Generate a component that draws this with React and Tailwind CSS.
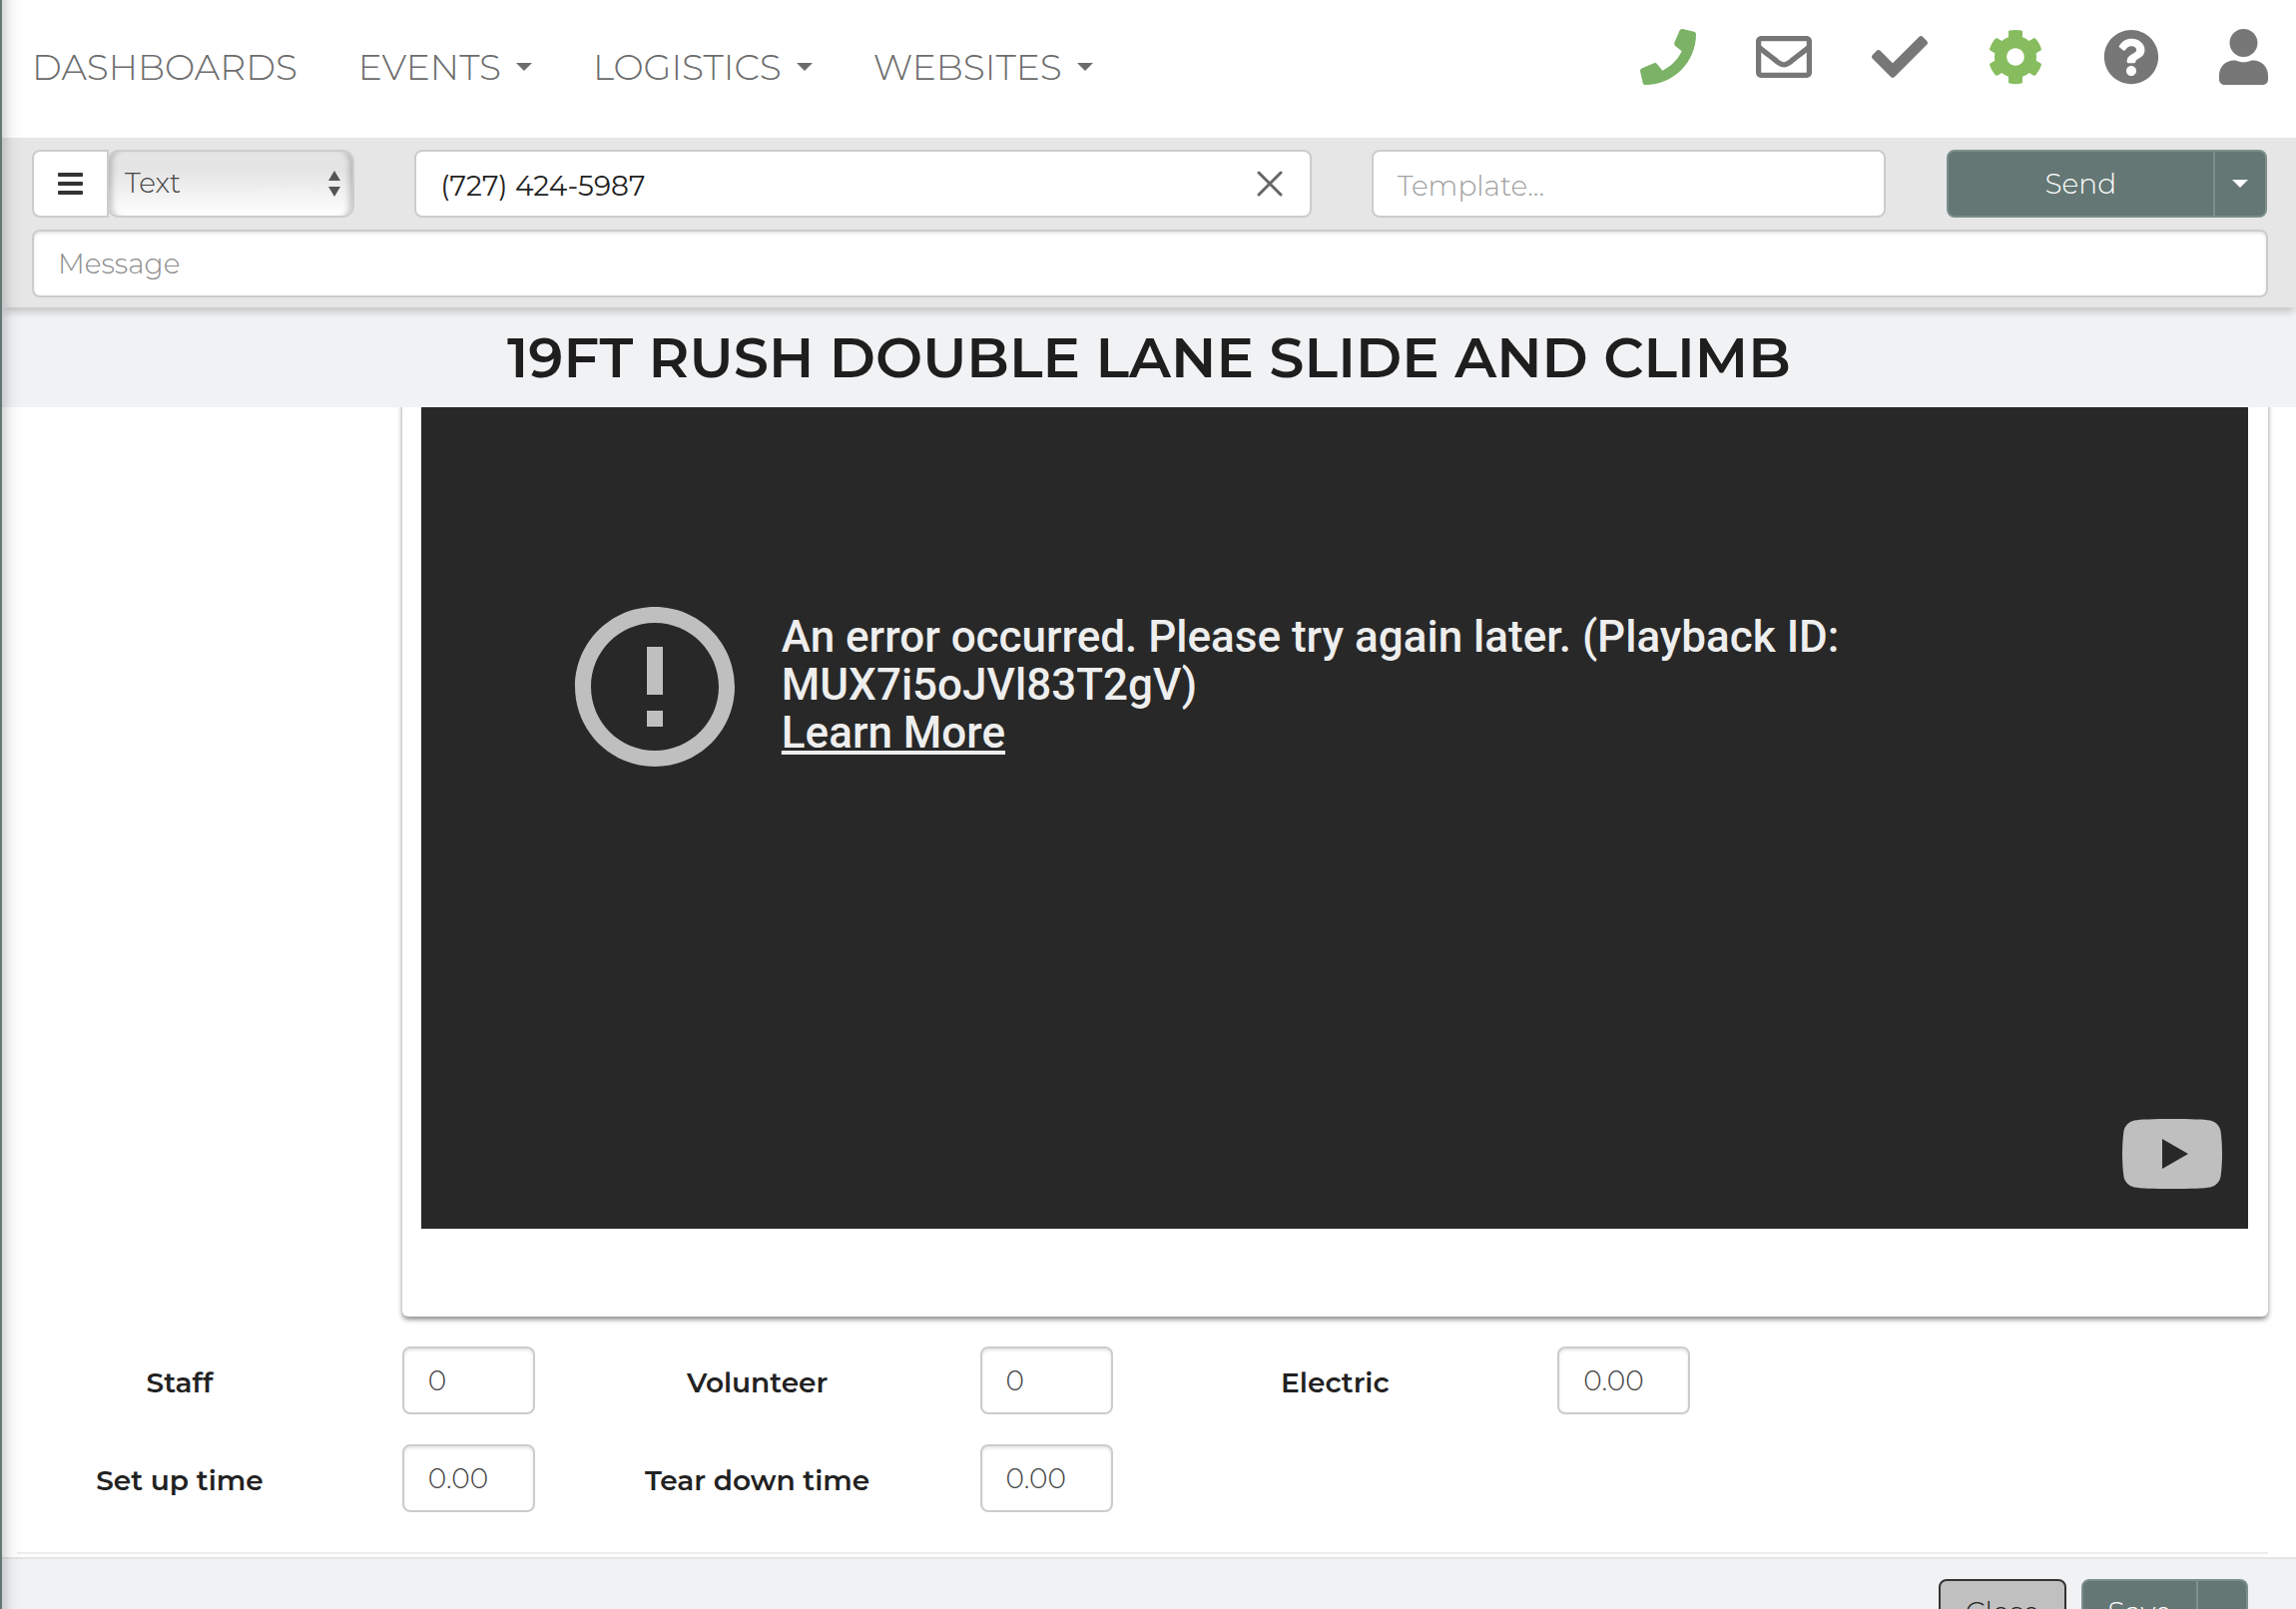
import { useState } from "react";
import {
  FaPhone,
  FaRegEnvelope,
  FaCheck,
  FaCog,
  FaQuestionCircle,
  FaUser,
} from "react-icons/fa";

const navItems = [
  { label: "DASHBOARDS", menu: false },
  { label: "EVENTS", menu: true },
  { label: "LOGISTICS", menu: true },
  { label: "WEBSITES", menu: true },
];

const navIcons = [
  { name: "Calls", Icon: FaPhone, style: "w-14 text-[#7bb266]" },
  { name: "Mail", Icon: FaRegEnvelope, style: "w-14 text-[#777777]" },
  { name: "Tasks", Icon: FaCheck, style: "w-14 text-[#777777]" },
  { name: "Settings", Icon: FaCog, style: "w-14 text-[#87bd5e]" },
  { name: "Help", Icon: FaQuestionCircle, style: "w-14 text-[#777777]" },
  { name: "Account", Icon: FaUser, style: "w-[49px] text-[#777777]" },
];

const Caret = () => (
  <svg viewBox="0 0 16 8" className="w-4 h-2 shrink-0" fill="currentColor">
    <path d="M0 0h16L8 8z" />
  </svg>
);

const Navbar = () => (
  <nav className="h-[138px] pl-[30px] pr-7 flex justify-between bg-white">
    <ul className="flex gap-[61px] pt-[42px]">
      {navItems.map(({ label, menu }) => (
        <li key={label}>
          <a
            href="#"
            className="flex items-center gap-[15px] text-[36px] leading-[50px] font-light text-[#6c6c6c]"
          >
            {label}
            {menu && <Caret />}
          </a>
        </li>
      ))}
    </ul>
    <div className="flex gap-[60px] pt-[29px]">
      {navIcons.map(({ name, Icon, style }) => (
        <button key={name} aria-label={name} className="h-14">
          <Icon className={`h-14 ${style}`} />
        </button>
      ))}
    </div>
  </nav>
);

const MessageBar = () => {
  const [phone, setPhone] = useState("(727) 424-5987");

  return (
    <form
      onSubmit={(e) => e.preventDefault()}
      className="relative z-10 pl-[30px] pr-7 pt-3 pb-[10px] bg-[#e6e6e6] shadow-[0_6px_8px_-2px_rgba(0,0,0,0.2)]"
    >
      <div className="grid grid-cols-12 gap-x-[60px]">
        {/* message type */}
        <div className="col-span-2 flex">
          <button
            type="button"
            aria-label="Options"
            className="w-[77px] h-[68px] shrink-0 flex items-center justify-center bg-white border-2 border-[#cccccc] rounded-l-lg"
          >
            <svg viewBox="0 0 25 22" className="w-[25px] h-[22px]" fill="#333333">
              <rect width="25" height="4" rx="1" />
              <rect y="9" width="25" height="4" rx="1" />
              <rect y="18" width="25" height="4" rx="1" />
            </svg>
          </button>
          <div className="relative flex-1 -ml-0.5">
            <select
              aria-label="Message type"
              className="appearance-none w-full h-[68px] px-4 pb-0.5 text-[28px] text-[#444444] font-light border-2 border-[#cccccc] rounded-xl bg-linear-to-b from-[#e5e5e5] from-30% to-white shadow-[inset_8px_0_6px_-5px_rgba(0,0,0,0.22),inset_-8px_0_6px_-5px_rgba(0,0,0,0.22)]"
            >
              <option>Text</option>
              <option>Email</option>
            </select>
            <svg
              viewBox="0 0 12 26"
              className="absolute right-[14px] top-[21px] w-3 h-[26px] pointer-events-none"
              fill="#555555"
            >
              <path d="M6 0l6 10H0zM6 26l6-10H0z" />
            </svg>
          </div>
        </div>

        {/* recipient */}
        <div className="col-span-5 h-[68px] flex items-center bg-white border-2 border-[#cccccc] rounded-lg">
          <input
            aria-label="Recipient"
            value={phone}
            onChange={(e) => setPhone(e.target.value)}
            className="flex-1 min-w-0 px-6 pt-1 text-[28px] text-[#222222] outline-none"
          />
          <button
            type="button"
            aria-label="Clear recipient"
            onClick={() => setPhone("")}
            className="mr-[27px]"
          >
            <svg viewBox="0 0 26 26" className="w-[26px] h-[26px]">
              <path d="M2 2l22 22M24 2L2 24" stroke="#666666" strokeWidth="3" strokeLinecap="round" />
            </svg>
          </button>
        </div>

        {/* template */}
        <input
          aria-label="Template"
          placeholder="Template..."
          className="col-span-3 h-[68px] px-6 pt-1 text-[28px] font-light bg-white border-2 border-[#cccccc] rounded-lg placeholder:text-[#a0a0a0]"
        />

        {/* send */}
        <div className="col-span-2 h-[68px] px-px flex text-white">
          <button className="flex-1 text-[28px] font-light bg-[#647774] border-2 border-[#7b8f8b] rounded-l-lg">
            Send
          </button>
          <button
            type="button"
            aria-label="More send options"
            className="w-[52px] flex items-center justify-center bg-[#647774] border-2 border-l-0 border-[#7b8f8b] rounded-r-lg"
          >
            <Caret />
          </button>
        </div>
      </div>

      <input
        aria-label="Message"
        placeholder="Message"
        className="w-full h-[68px] mt-3 px-6 text-[28px] font-light bg-white border-2 border-[#cccccc] rounded-lg shadow-[inset_0_2px_3px_rgba(0,0,0,0.1)] placeholder:text-[#8c8c8c] block"
      />
    </form>
  );
};

const VideoError = () => (
  <div className="h-[823px] bg-[#282828] flex flex-col justify-between">
    <div className="pl-[138px] pt-[184px] flex items-center gap-[31px]">
      <svg viewBox="0 0 24 24" className="w-48 h-48 shrink-0" fill="#bfbfbf">
        <path d="M11 15h2v2h-2zm0-8h2v6h-2zm.99-5C6.47 2 2 6.48 2 12s4.47 10 9.99 10C17.52 22 22 17.52 22 12S17.52 2 11.99 2zM12 20c-4.42 0-8-3.58-8-8s3.58-8 8-8 8 3.58 8 8-3.58 8-8 8z" />
      </svg>
      <p className="max-w-[1200px] pb-1 font-['Roboto',sans-serif] font-medium text-[44px] leading-[48px] text-[#eeeeee]">
        An error occurred. Please try again later. (Playback ID:
        MUX7i5oJVl83T2gV)
        <br />
        <a href="#" className="underline">
          Learn More
        </a>
      </p>
    </div>
    <a href="#" aria-label="Watch on YouTube" className="self-end mr-[26px] mb-10">
      <svg viewBox="0 0 100 70" className="w-[100px] h-[70px]">
        <path
          fill="#bfbfbf"
          d="M50 0C68 0 82 .5 88 1.500C94 3 97.500 7 98.500 12C99.500 19 100 27 100 35S99.500 51 98.500 58C97.500 63 94 67 88 68.500C82 69.500 68 70 50 70S18 69.500 12 68.500C6 67 2.500 63 1.500 58C.5 51 0 43 0 35S.5 19 1.500 12C2.500 7 6 3 12 1.500C18 .5 32 0 50 0z"
        />
        <path fill="#282828" d="M40 20l26 15-26 15z" />
      </svg>
    </a>
  </div>
);

const NumberField = ({ id, label, value }) => (
  <>
    <label
      htmlFor={id}
      className="col-span-2 px-[30px] pt-1 self-center text-center text-[28px] leading-10 font-semibold text-[#222222]"
    >
      {label}
    </label>
    <div className="px-[30px]">
      <input
        id={id}
        defaultValue={value}
        className="w-full h-[68px] px-6 text-[28px] font-light text-[#444444] bg-white border-2 border-[#cccccc] rounded-lg shadow-[inset_0_2px_3px_rgba(0,0,0,0.1)]"
      />
    </div>
  </>
);

const App = () => {
  return (
    <div className="relative h-screen overflow-hidden border-l-2 border-[#647774] bg-white font-['Montserrat','Inter',sans-serif]">
      <Navbar />
      <MessageBar />

      <h1 className="relative h-[100px] pt-[14px] bg-[#f1f2f4] text-center text-[56px] leading-[72px] font-semibold text-[#1e1e1e]">
        19FT RUSH DOUBLE LANE SLIDE AND CLIMB
      </h1>

      <main className="pl-[15px] pr-7">
        <div className="grid grid-cols-12 gap-y-[30px] -mx-[30px]">
          <div className="col-start-3 col-span-10 px-[30px]">
            {/* the card runs up under the title bar */}
            <div className="-mt-5 pt-5 pl-[19px] pr-5 pb-[88px] rounded-md shadow-[0_3px_5px_rgba(0,0,0,0.45)]">
              <VideoError />
            </div>
          </div>

          <NumberField id="staff" label="Staff" value="0" />
          <NumberField id="volunteer" label="Volunteer" value="0" />
          <NumberField id="electric" label="Electric" value="0.00" />
          <div className="col-span-3" />
          <NumberField id="setup" label="Set up time" value="0.00" />
          <NumberField id="teardown" label="Tear down time" value="0.00" />
        </div>
        <hr className="mt-10 mb-[3px] border-t-2 border-[#ededed]" />
      </main>

      <footer className="pt-5 pb-5 pr-12 flex justify-end gap-[15px] bg-[#f1f2f4] border-t-2 border-[#e5e5e5]">
        <button className="w-32 h-[68px] pb-0.5 text-[28px] font-light text-[#222222] bg-[#c0c0c0] border-2 border-[#333333] rounded-lg">
          Close
        </button>
        <div className="flex h-[68px] text-white">
          <button className="w-[117px] pb-0.5 text-[28px] font-light bg-[#647774] border-2 border-[#7b8f8b] rounded-l-lg">
            Save
          </button>
          <button
            aria-label="More save options"
            className="w-[50px] flex items-center justify-center bg-[#647774] border-2 border-l-0 border-[#7b8f8b] rounded-r-lg"
          >
            <Caret />
          </button>
        </div>
      </footer>

      {/* shade cast by the side edge */}
      <div className="absolute z-20 inset-y-0 left-0 w-5 pointer-events-none bg-linear-to-r from-black/15 via-black/3 to-transparent" />
    </div>
  );
};

export default App;
